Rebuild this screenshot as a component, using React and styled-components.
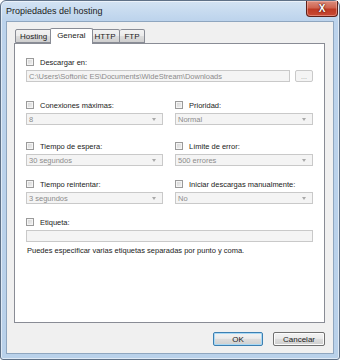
import React from "react";
import styled, { createGlobalStyle } from "styled-components";

const Global = createGlobalStyle`
  html, body { margin: 0; padding: 0; background: #ffffff; }
  * { box-sizing: border-box; }
  body { font-family: "Liberation Sans", Arial, sans-serif; }
`;

const Window = styled.div`
  width: 340px;
  height: 360px;
  border: 1px solid #5f7187;
  border-radius: 6px 6px 3px 3px;
  background: linear-gradient(180deg, #d3e3f3 0px, #bcd3ec 20px, #b9d1ea 100%);
  padding: 0 5px 5px 5px;
  display: flex;
  flex-direction: column;
  box-shadow: inset 0 0 0 1px rgba(255,255,255,0.55);
`;

const TitleBar = styled.div`
  height: 20px;
  display: flex;
  align-items: flex-start;
  justify-content: space-between;
`;

const Title = styled.span`
  font-size: 9px;
  color: #1b1b1b;
  margin-top: 5px;
`;

const Close = styled.div`
  width: 32px;
  height: 16px;
  flex: none;
  margin-right: -4px;
  border: 1px solid #5e2019;
  border-top: none;
  border-radius: 0 0 4px 4px;
  background: linear-gradient(180deg, #dc8e7e 0%, #cf6450 45%, #bd3a24 55%, #c94a34 100%);
  box-shadow: inset 0 0 0 1px rgba(255, 200, 190, 0.45);
  display: flex;
  align-items: center;
  justify-content: center;
  color: #ffffff;
  font-size: 10px;
  font-weight: bold;
  text-shadow: 0 0 2px #4b1008, 0 0 1px #4b1008;
`;

const Client = styled.div`
  flex: 1;
  background: #f0f0f0;
  border: 1px solid #8fa6bf;
  padding: 6px 8px 0 7px;
  display: flex;
  flex-direction: column;
`;

const TabStrip = styled.div`
  display: flex;
  align-items: flex-end;
  height: 15px;
  padding-left: 1px;
  position: relative;
  z-index: 1;
`;

const Tab = styled.div`
  height: ${(p) => (p.$active ? "16px" : "14px")};
  margin-bottom: ${(p) => (p.$active ? "-1px" : "0")};
  margin-left: ${(p) => (p.$active ? "-2px" : "0")};
  margin-right: ${(p) => (p.$active ? "-2px" : "0")};
  padding: 0 ${(p) => (p.$active ? "6px" : "4px")};
  padding-bottom: ${(p) => (p.$active ? "2px" : "0")};
  border: 1px solid #898c95;
  border-bottom: ${(p) => (p.$active ? "none" : "1px solid #898c95")};
  border-left: ${(p) => (p.$first || p.$active ? "1px solid #898c95" : "none")};
  background: ${(p) =>
    p.$active ? "#ffffff" : "linear-gradient(180deg, #f2f2f2 0%, #ebebeb 50%, #dddddd 51%, #cfcfcf 100%)"};
  border-radius: 2px 2px 0 0;
  font-size: 8px;
  color: #1b1b1b;
  display: flex;
  align-items: center;
  position: relative;
  z-index: ${(p) => (p.$active ? 2 : 1)};
`;

const Panel = styled.div`
  background: #ffffff;
  border: 1px solid #898c95;
  height: 280px;
  padding: 12px 11px 0 11px;
  display: flex;
  flex-direction: column;
`;

const Field = styled.div`
  display: flex;
  flex-direction: column;
  gap: 2px;
  margin-top: ${(p) => p.$mt || 0}px;
`;

const Row2 = styled.div`
  display: grid;
  grid-template-columns: 137px 138px;
  column-gap: 12px;
  margin-top: ${(p) => p.$mt || 0}px;
`;

const LabelRow = styled.label`
  height: 12px;
  display: flex;
  align-items: center;
  gap: 6px;
  font-size: 7.5px;
  color: #222222;
`;

const Check = styled.span`
  width: 8px;
  height: 8px;
  border: 1px solid #9a9a9a;
  background: linear-gradient(135deg, #d2d2d2 0%, #e6e6e6 60%, #f2f2f2 100%);
  box-shadow: inset 0 0 0 1px #f4f4f4;
  flex: none;
`;

const Input = styled.div`
  height: 12px;
  flex: ${(p) => (p.$grow ? "1 1 auto" : "none")};
  border: 1px solid #c9c9c9;
  background: #f4f4f4;
  font-size: 7.5px;
  color: #8c8c8c;
  display: flex;
  align-items: center;
  padding-left: 2px;
  white-space: nowrap;
  overflow: hidden;
`;

const Combo = styled(Input)`
  justify-content: space-between;
  padding-right: 6px;
`;

const Arrow = styled.span`
  width: 0;
  height: 0;
  border-left: 2.5px solid transparent;
  border-right: 2.5px solid transparent;
  border-top: 3px solid #a9a9a9;
`;

const PathRow = styled.div`
  display: flex;
  gap: 5px;
`;

const Browse = styled.div`
  width: 18px;
  height: 12px;
  border: 1px solid #c9c9c9;
  border-radius: 2px;
  background: #f4f4f4;
  font-size: 7px;
  color: #9a9a9a;
  display: flex;
  align-items: center;
  justify-content: center;
  line-height: 1;
`;

const Help = styled.div`
  font-size: 7.5px;
  color: #222222;
  margin-top: 4px;
  padding-left: 1px;
`;

const Buttons = styled.div`
  display: flex;
  justify-content: flex-end;
  gap: 10px;
  margin-top: 9px;
`;

const Button = styled.div`
  width: ${(p) => p.$w}px;
  height: 14px;
  border: 1px solid ${(p) => (p.$default ? "#3c7fb1" : "#707070")};
  border-radius: 2px;
  background: linear-gradient(180deg, #f2f2f2 0%, #ebebeb 45%, #dddddd 50%, #cfcfcf 100%);
  box-shadow: inset 0 0 0 1px ${(p) => (p.$default ? "#a9d9f5" : "#fbfbfb")};
  font-size: 8px;
  color: #1b1b1b;
  display: flex;
  align-items: center;
  justify-content: center;
`;

function CheckLabel({ children }) {
  return (
    <LabelRow>
      <Check />
      {children}
    </LabelRow>
  );
}

function ComboField({ label, value }) {
  return (
    <Field>
      <CheckLabel>{label}</CheckLabel>
      <Combo>
        <span>{value}</span>
        <Arrow />
      </Combo>
    </Field>
  );
}

export default function App() {
  return (
    <>
      <Global />
      <Window>
        <TitleBar>
          <Title>Propiedades del hosting</Title>
          <Close>X</Close>
        </TitleBar>
        <Client>
          <TabStrip>
            <Tab $first>Hosting</Tab>
            <Tab $active>General</Tab>
            <Tab>HTTP</Tab>
            <Tab>FTP</Tab>
          </TabStrip>
          <Panel>
            <Field>
              <CheckLabel>Descargar en:</CheckLabel>
              <PathRow>
                <Input $grow>C:\Users\Softonic ES\Documents\WideStream\Downloads</Input>
                <Browse>...</Browse>
              </PathRow>
            </Field>
            <Row2 $mt={17}>
              <ComboField label="Conexiones máximas:" value="8" />
              <ComboField label="Prioridad:" value="Normal" />
            </Row2>
            <Row2 $mt={15}>
              <ComboField label="Tiempo de espera:" value="30 segundos" />
              <ComboField label="Límite de error:" value="500 errores" />
            </Row2>
            <Row2 $mt={12}>
              <ComboField label="Tiempo reintentar:" value="3 segundos" />
              <ComboField label="Iniciar descargas manualmente:" value="No" />
            </Row2>
            <Field $mt={12}>
              <CheckLabel>Etiqueta:</CheckLabel>
              <Input />
            </Field>
            <Help>Puedes especificar varias etiquetas separadas por punto y coma.</Help>
          </Panel>
          <Buttons>
            <Button $w={50} $default>OK</Button>
            <Button $w={52}>Cancelar</Button>
          </Buttons>
        </Client>
      </Window>
    </>
  );
}
